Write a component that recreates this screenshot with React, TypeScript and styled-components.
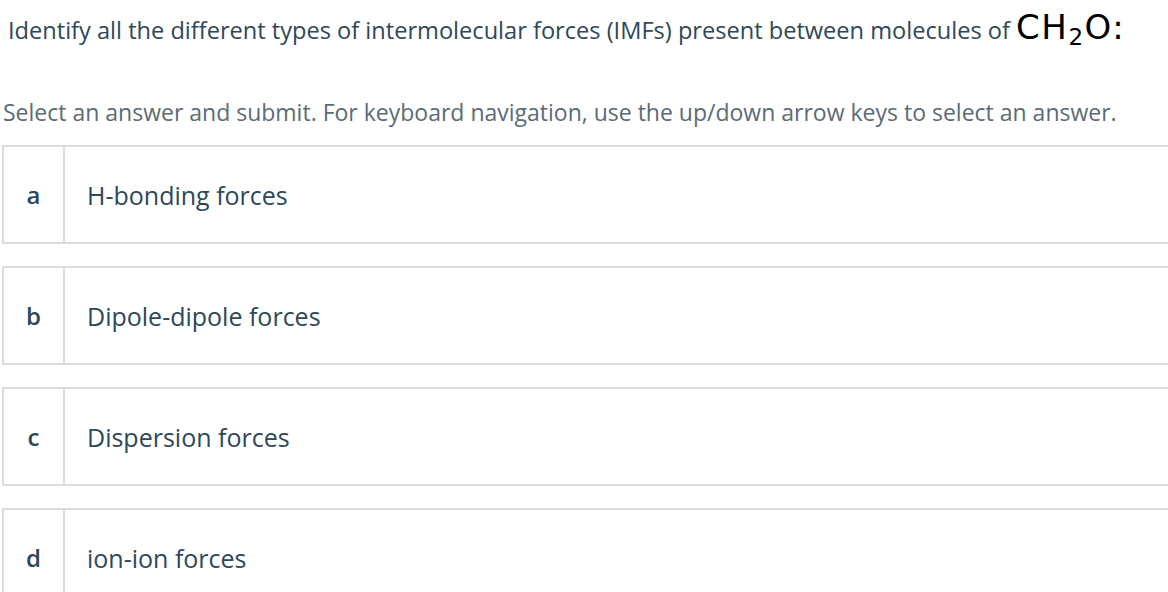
import styled, { createGlobalStyle } from "styled-components";

const GlobalStyle = createGlobalStyle`
  html, body {
    margin: 0;
    padding: 0;
    background: #fff;
    overflow: hidden;
  }
  body {
    font-family: "Source Sans Pro", "Open Sans", "Noto Sans", sans-serif;
  }
`;

const answers = [
  { key: "a", label: "H-bonding forces" },
  { key: "b", label: "Dipole-dipole forces" },
  { key: "c", label: "Dispersion forces" },
  { key: "d", label: "ion-ion forces" },
];

const App = () => {
  return (
    <>
      <GlobalStyle />
      <Pub.Page>
        <Pub.Question>
          Identify all the different types of intermolecular forces (IMFs) present between molecules of{" "}
          <Pub.Formula>
            CH<sub>2</sub>O:
          </Pub.Formula>
        </Pub.Question>
        <Pub.Hint>
          Select an answer and submit. For keyboard navigation, use the up/down arrow keys to select an answer.
        </Pub.Hint>
        <Pub.List>
          {answers.map((a) => (
            <Pub.Option key={a.key}>
              <Pub.Letter>{a.key}</Pub.Letter>
              <Pub.Label>{a.label}</Pub.Label>
            </Pub.Option>
          ))}
        </Pub.List>
      </Pub.Page>
    </>
  );
};

export default App;

const Pub = {
  Page: styled.div`
    width: 1168px;
    height: 592px;
    overflow: hidden;
    padding-left: 2px;
    box-sizing: border-box;
  `,
  Question: styled.div`
    margin: 8px 0 0 6px;
    height: 38px;
    font-size: 23.6px;
    line-height: 38px;
    color: #2d4859;
    white-space: nowrap;
  `,
  Formula: styled.span`
    font-family: "DejaVu Sans", sans-serif;
    font-size: 34px;
    letter-spacing: 1.5px;
    color: #000;
    & sub {
      font-size: 23px;
      vertical-align: -6px;
      line-height: 0;
    }
  `,
  Hint: styled.div`
    margin: 52px 0 0 1px;
    font-size: 23px;
    line-height: 28px;
    color: #5b6b75;
    white-space: nowrap;
  `,
  List: styled.div`
    margin-top: 19px;
    display: flex;
    flex-direction: column;
    gap: 22px;
    width: 1180px;
  `,
  Option: styled.div`
    display: flex;
    height: 99px;
    box-sizing: border-box;
    border: 2px solid #d9dde1;
  `,
  Letter: styled.div`
    width: 59px;
    flex: none;
    display: flex;
    align-items: center;
    justify-content: center;
    font-size: 24px;
    font-weight: 600;
    color: #2d4859;
    border-right: 2px solid #d9dde1;
  `,
  Label: styled.div`
    display: flex;
    align-items: center;
    padding-left: 22px;
    font-size: 25px;
    color: #2d4859;
  `,
};
